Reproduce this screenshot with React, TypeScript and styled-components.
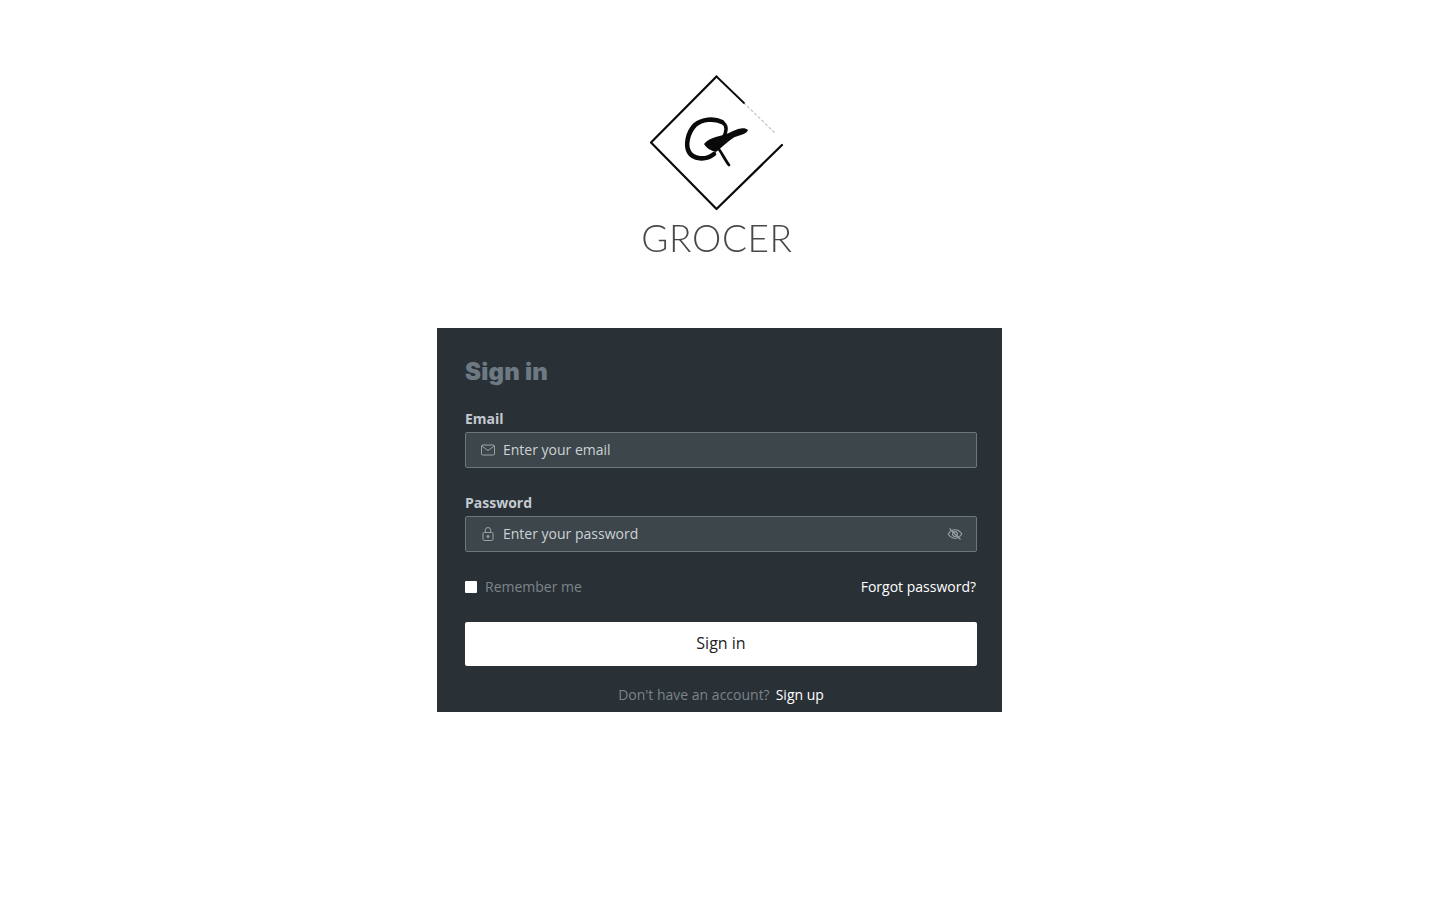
import React from "react";
import styled, { createGlobalStyle } from "styled-components";

const Global = createGlobalStyle`
  html, body { margin: 0; padding: 0; background: #fff; }
  body { font-family: "Open Sans", "Liberation Sans", sans-serif; }
  * { box-sizing: border-box; }
`;

const Page = styled.main`
  min-height: 900px;
  padding-top: 70px;
  display: flex;
  flex-direction: column;
  align-items: center;
`;

const Brand = styled.header`
  width: 160px;
  margin-right: 6px;
  height: 258px;
  display: flex;
  flex-direction: column;
  align-items: center;
`;

const LogoMark = styled.svg`
  display: block;
  width: 160px;
  height: 146px;
`;

const Wordmark = styled.div`
  font-family: "Lato", "Open Sans", sans-serif;
  font-weight: 300;
  font-size: 37px;
  line-height: 44px;
  letter-spacing: 0.6px;
  color: #484848;
  white-space: nowrap;
  will-change: opacity;
`;

const Card = styled.section`
  width: 565px;
  height: 384px;
  margin-right: 1px;
  background: #2a3136;
  padding: 28px 25px 0 28px;
`;

const Title = styled.h1`
  margin: 0 0 20px;
  font-family: "Inter", "Open Sans", sans-serif;
  font-weight: 900;
  font-size: 24px;
  line-height: 32px;
  letter-spacing: 0.2px;
  color: #6e7a83;
`;

const Field = styled.div`
  margin-bottom: 24px;
`;

const Label = styled.label`
  display: block;
  font-weight: 700;
  font-size: 14px;
  line-height: 22px;
  margin-bottom: 2px;
  color: #c3c9d0;
`;

const InputBox = styled.div`
  height: 36px;
  display: flex;
  align-items: center;
  gap: 7px;
  padding: 0 13px 0 14px;
  background: #3c464b;
  border: 1px solid #6b767c;
  border-radius: 2px;
`;

const InputIcon = styled.svg`
  flex: none;
  width: 16px;
  height: 16px;
  color: #9aa3a9;
`;

const Input = styled.input`
  flex: 1;
  min-width: 0;
  border: 0;
  outline: 0;
  padding: 0;
  background: transparent;
  font: 400 14px/20px "Open Sans", sans-serif;
  color: #d0d5d9;
  &::placeholder { color: #cdd2d6; opacity: 1; }
`;

const OptionsRow = styled.div`
  margin-top: 25px;
  height: 20px;
  padding-right: 1px;
  display: flex;
  align-items: center;
  justify-content: space-between;
`;

const Remember = styled.label`
  display: flex;
  align-items: center;
  gap: 8px;
  font-size: 14px;
  line-height: 20px;
  color: #7b848a;
`;

const Check = styled.input`
  appearance: none;
  width: 12px;
  height: 12px;
  margin: 0;
  background: #fff;
  border-radius: 1px;
`;

const TextLink = styled.a`
  font-size: 14px;
  line-height: 20px;
  color: #fff;
  text-decoration: none;
`;

const Submit = styled.button`
  display: block;
  width: 100%;
  height: 44px;
  margin-top: 25px;
  padding: 0 0 2px;
  background: #fff;
  border: 0;
  border-radius: 2px;
  font: 400 16px/24px "Open Sans", sans-serif;
  color: #1d2227;
`;

const Footer = styled.p`
  margin: 19px 0 0;
  display: flex;
  justify-content: center;
  gap: 6px;
  font-size: 14px;
  line-height: 20px;
  color: #7b848a;
`;

const Stroke = styled.path`
  fill: none;
  stroke: #0a0a0a;
  stroke-linecap: round;
  stroke-linejoin: round;
`;

const Blob = styled.path`
  fill: #0a0a0a;
`;

export default function App() {
  return (
    <>
      <Global />
      <Page>
        <Brand>
          <LogoMark viewBox="637 70 160 146" aria-label="Grocer logo">
            <Stroke d="M716.5 76.5 L651 142.5 L716.5 209 L782 145" strokeWidth={2.2} />
            <Stroke d="M716.5 76.5 L744 103" strokeWidth={1.8} />
            <Stroke d="M744 103 L776 134" strokeWidth={1.2} strokeDasharray="2 3" opacity={0.25} />
            <Stroke d="M722 122 C714 118 702 119 695 125 C688 132 685 145 689 152 C693 159 705 161 714 154" strokeWidth={4.6} />
            <Stroke d="M722 122 C727 125 727 131 723 138" strokeWidth={3.4} />
            <Blob d="M704 144 C710 136 722 137 733 131 C739 128 745 127 748 130 C746 135 738 135 733 138 C727 142 722 147 716 152 C712 151 707 149 704 144 Z" />
            <Stroke d="M718 148 C722 153 725 160 729 165" strokeWidth={2.8} />
          </LogoMark>
          <Wordmark>GROCER</Wordmark>
        </Brand>
        <Card>
          <Title>Sign in</Title>
          <Field>
            <Label>Email</Label>
            <InputBox>
              <InputIcon viewBox="0 0 16 16" fill="none" stroke="currentColor" strokeWidth={1}>
                <rect x="1.5" y="3" width="13" height="10" rx="1.2" />
                <path d="M1.8 4l6.2 4.6L14.2 4" />
              </InputIcon>
              <Input placeholder="Enter your email" />
            </InputBox>
          </Field>
          <Field>
            <Label>Password</Label>
            <InputBox>
              <InputIcon viewBox="0 0 16 16" fill="none" stroke="currentColor" strokeWidth={1}>
                <rect x="3" y="6.5" width="10" height="8" rx="1.2" />
                <path d="M5.3 6.5V4.2a2.7 2.7 0 0 1 5.4 0v2.3" />
                <circle cx="8" cy="10.5" r="1" fill="currentColor" />
              </InputIcon>
              <Input placeholder="Enter your password" />
              <InputIcon viewBox="0 0 16 16" fill="none" stroke="currentColor" strokeWidth={1.1}>
                <path d="M1.2 8C3 5.2 5.3 3.8 8 3.8s5 1.4 6.8 4.2C13 10.8 10.7 12.2 8 12.2S3 10.8 1.2 8z" />
                <circle cx="8" cy="8" r="2.4" />
                <path d="M2.5 2.5l11 11" />
              </InputIcon>
            </InputBox>
          </Field>
          <OptionsRow>
            <Remember>
              <Check type="checkbox" />
              Remember me
            </Remember>
            <TextLink href="#">Forgot password?</TextLink>
          </OptionsRow>
          <Submit type="button">Sign in</Submit>
          <Footer>
            Don't have an account?
            <TextLink href="#">Sign up</TextLink>
          </Footer>
        </Card>
      </Page>
    </>
  );
}
